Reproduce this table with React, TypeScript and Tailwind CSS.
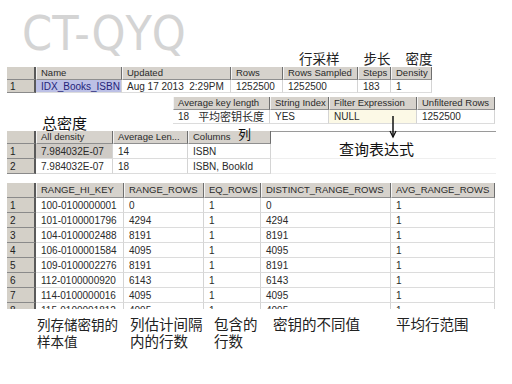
const ui = "font-['Liberation_Sans','Noto_Sans_CJK_SC',sans-serif]";
const cjk = "font-['Noto_Sans_CJK_SC','Liberation_Sans',sans-serif]";

function Corner({ h }: { h: string }) {
  return <div className={`w-[29px] shrink-0 ${h} bg-[#d4d0c8] border-r-2 border-r-[#5a5a5a] border-b border-b-[#8a8a8a]`} />;
}

function Head({ label, w }: { label: React.ReactNode; w: string }) {
  return (
    <div
      className={`${w} shrink-0 h-full bg-[#d6d2cc] border-l border-l-[#f4f4f4] border-r border-r-[#6e6e6e] border-b border-b-[#8f8f8f] pl-[4px] flex items-center text-[9.5px] text-[#2a2a2a] whitespace-nowrap overflow-hidden`}
    >
      {label}
    </div>
  );
}

function RowNum({ n }: { n: number }) {
  return (
    <div className="w-[29px] shrink-0 h-full bg-[#d4d0c8] border-r-2 border-r-[#5a5a5a] border-b border-b-[#8a8a8a] pl-[3px] flex items-center text-[10px] text-[#222]">
      {n}
    </div>
  );
}

function Cell({ children, w, bg }: { children: React.ReactNode; w: string; bg?: string }) {
  return (
    <div
      className={`${w} shrink-0 h-full ${bg ?? "bg-white"} border-r border-r-[#d4d4d4] border-b border-b-[#dcdcdc] px-[5px] flex items-center text-[10px] text-[#2a2a2a] whitespace-pre overflow-hidden`}
    >
      {children}
    </div>
  );
}

const histCols = [
  { label: "RANGE_HI_KEY", w: "w-[88px]" },
  { label: "RANGE_ROWS", w: "w-[80px]" },
  { label: "EQ_ROWS", w: "w-[57px]" },
  { label: "DISTINCT_RANGE_ROWS", w: "w-[130px]" },
  { label: "AVG_RANGE_ROWS", w: "w-[104px]" },
];

const histRows = [
  ["100-0100000001", "0", "1", "0", "1"],
  ["101-0100001796", "4294", "1", "4294", "1"],
  ["104-0100002488", "8191", "1", "8191", "1"],
  ["106-0100001584", "4095", "1", "4095", "1"],
  ["109-0100002276", "8191", "1", "8191", "1"],
  ["112-0100000920", "6143", "1", "6143", "1"],
  ["114-0100000016", "4095", "1", "4095", "1"],
  ["115-0100001812", "4095", "1", "4095", "1"],
];

export default function App() {
  return (
    <div className={`relative w-[512px] h-[384px] bg-white overflow-hidden ${ui}`}>
      {/* Title */}
      <div className="mt-[9px] ml-[22px] h-[48px] text-[48px] leading-[48px] text-[#d4d4d4] font-['Liberation_Sans_Narrow','DejaVu_Sans_Condensed',sans-serif]">
        CT-QYQ
      </div>

      {/* Header stats */}
      <div className="mt-[10px] ml-[7px] flex flex-col">
        <div className="flex h-[13px]">
          <Corner h="h-[13px]" />
          <Head label="Name" w="w-[86px]" />
          <Head label="Updated" w="w-[109px]" />
          <Head label="Rows" w="w-[52px]" />
          <Head label="Rows Sampled" w="w-[75px]" />
          <Head label="Steps" w="w-[33px]" />
          <Head label="Density" w="w-[41px]" />
        </div>
        <div className="flex h-[13px]">
          <RowNum n={1} />
          <Cell w="w-[86px]" bg="bg-[#bcc0e6]">
            <span className="text-[#24247a]">IDX_Books_ISBN</span>
          </Cell>
          <Cell w="w-[109px]">Aug 17 2013  2:29PM</Cell>
          <Cell w="w-[52px]">1252500</Cell>
          <Cell w="w-[75px]">1252500</Cell>
          <Cell w="w-[33px]">183</Cell>
          <Cell w="w-[41px]">1</Cell>
        </div>
      </div>

      <div className="mt-[4px] ml-[173px] flex flex-col">
        <div className="flex h-[13px]">
          <Head label="Average key length" w="w-[97px]" />
          <Head label="String Index" w="w-[59px]" />
          <Head label="Filter Expression" w="w-[88px]" />
          <Head label="Unfiltered Rows" w="w-[78px]" />
        </div>
        <div className="flex h-[14px]">
          <Cell w="w-[97px]">
            18<span className={`ml-[9px] text-[11px] ${cjk}`}>平均密钥长度</span>
          </Cell>
          <Cell w="w-[59px]">YES</Cell>
          <Cell w="w-[88px]" bg="bg-[#fcf9e6]">NULL</Cell>
          <Cell w="w-[78px]">1252500</Cell>
        </div>
      </div>

      {/* Density vector */}
      <div className="mt-[7px] ml-[7px] w-[489px] flex flex-col">
        <div className="flex h-[13px]">
          <Corner h="h-[13px]" />
          <Head label="All density" w="w-[77px]" />
          <Head label="Average Len..." w="w-[75px]" />
          <Head label="Columns" w="w-[83px]" />
          <div className="flex-1 border-t border-t-[#9a9a9a]" />
        </div>
        {[
          ["7.984032E-07", "14", "ISBN"],
          ["7.984032E-07", "18", "ISBN, BookId"],
        ].map((r, i) => (
          <div key={i} className="flex h-[15px]">
            <RowNum n={i + 1} />
            <Cell w="w-[77px]" bg={i === 0 ? "bg-[#cfcbc6]" : "bg-white"}>{r[0]}</Cell>
            <Cell w="w-[75px]">{r[1]}</Cell>
            <Cell w="w-[83px]">{r[2]}</Cell>
            <div className="flex-1 border-b border-b-[#efefef]" />
          </div>
        ))}
      </div>

      {/* Histogram */}
      <div className="mt-[9px] ml-[7px] h-[126px] overflow-hidden flex flex-col">
        <div className="flex h-[15px] shrink-0">
          <Corner h="h-[15px]" />
          {histCols.map((c) => (
            <Head key={c.label} label={c.label} w={c.w} />
          ))}
        </div>
        {histRows.map((r, i) => (
          <div key={i} className="flex h-[15px] shrink-0">
            <RowNum n={i + 1} />
            {r.map((v, j) => (
              <Cell key={j} w={histCols[j].w}>{v}</Cell>
            ))}
          </div>
        ))}
      </div>

      {/* Bottom annotations */}
      <div className={`mt-[7px] ml-[37px] flex text-[14.5px] leading-[16.5px] text-[#222] ${cjk}`}>
        <div className="w-[93px] text-[13.5px]">
          列存储密钥的
          <br />
          样本值
        </div>
        <div className="w-[84px]">
          列估计间隔
          <br />
          内的行数
        </div>
        <div className="w-[59px]">
          包含的
          <br />
          行数
        </div>
        <div className="w-[123px]">密钥的不同值</div>
        <div>平均行范围</div>
      </div>

      {/* Floating annotations */}
      <div className={`absolute left-[299px] top-[51px] flex text-[13.5px] leading-[14px] text-[#222] ${cjk}`}>
        <span>行采样</span>
        <span className="ml-[24px]">步长</span>
        <span className="ml-[15px]">密度</span>
      </div>
      <div className={`absolute left-[42px] top-[115px] text-[15px] leading-[15px] text-[#111] ${cjk}`}>总密度</div>
      <div className={`absolute left-[238px] top-[127px] text-[13px] leading-[13px] text-[#111] ${cjk}`}>列</div>
      <div className={`absolute left-[339px] top-[141px] text-[15px] leading-[15px] text-[#111] ${cjk}`}>查询表达式</div>
      <svg className="absolute left-[388px] top-[116px]" width="10" height="23" viewBox="0 0 10 23">
        <line x1="5" y1="0" x2="5" y2="21" stroke="#111" strokeWidth="1.5" />
        <polyline points="2,15 5,21 8,15" fill="none" stroke="#111" strokeWidth="1.3" />
      </svg>
    </div>
  );
}
